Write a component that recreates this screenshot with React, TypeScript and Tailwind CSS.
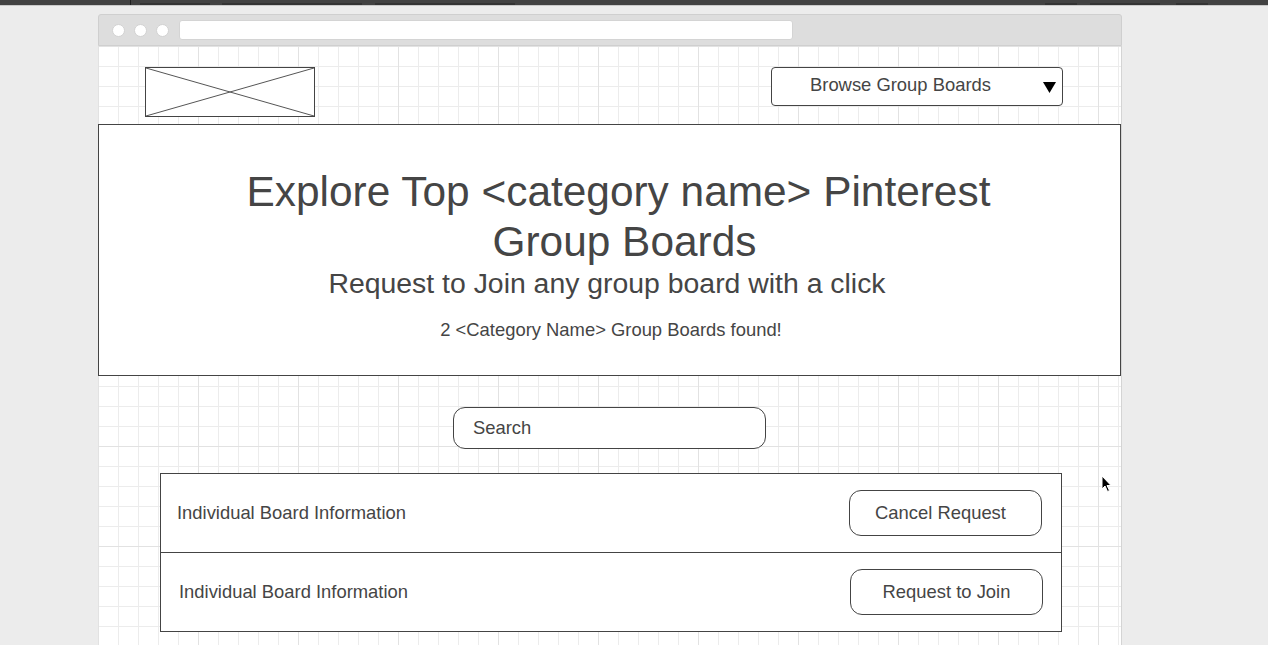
import React from "react"

const rows = [
  { label: "Individual Board Information", action: "Cancel Request", textPad: "pl-[16px]", btnPad: "pr-[19px]", btnText: "pr-[10px]" },
  { label: "Individual Board Information", action: "Request to Join", textPad: "pl-[18px]", btnPad: "pr-[18px]", btnText: "" },
]

function TopBar() {
  return (
    <div className="flex h-[6px] bg-[#424242] border-b border-[#c9c9c9]">
      <div className="w-[130px] shrink-0" />
      <div className="w-px h-full bg-[#1f1f1f]" />
      <div className="ml-[9px] w-[70px] h-[2px] self-end bg-[#333333]" />
      <div className="ml-[12px] w-[140px] h-[2px] self-end bg-[#333333]" />
      <div className="ml-[13px] w-[140px] h-[2px] self-end bg-[#333333]" />
      <div className="ml-[530px] w-[32px] h-[2px] self-end bg-[#333333]" />
      <div className="ml-[13px] w-[70px] h-[2px] self-end bg-[#333333]" />
      <div className="ml-[16px] w-[32px] h-[2px] self-end bg-[#333333]" />
    </div>
  )
}

function TitleBar() {
  return (
    <div className="flex items-center h-[32px] bg-[#dddddd] border border-[#cfcfcf] rounded-t-[3px] pl-[13px]">
      <div className="flex gap-[9px]">
        <span className="block w-[13px] h-[13px] rounded-full bg-white border border-[#d2d2d2]" />
        <span className="block w-[13px] h-[13px] rounded-full bg-white border border-[#d2d2d2]" />
        <span className="block w-[13px] h-[13px] rounded-full bg-white border border-[#d2d2d2]" />
      </div>
      <div className="ml-[10px] w-[614px] h-[20px] bg-white rounded-[3px] border border-[#d4d4d4]" />
    </div>
  )
}

function Cursor() {
  return (
    <svg className="absolute left-[1003px] top-[429px]" width="12" height="18" viewBox="0 0 12 18">
      <path d="M1 1 L1 14 L4 11 L6.5 16.5 L8.5 15.5 L6 10.5 L10 10.5 Z" fill="#000" stroke="#fff" strokeWidth="1" strokeLinejoin="round" />
    </svg>
  )
}

export default function App() {
  return (
    <div className="h-[645px] overflow-hidden bg-[#ececec] font-['Liberation_Sans',Arial,sans-serif] text-[#454545]">
      <TopBar />
      <div className="ml-[98px] mt-[8px] w-[1024px]">
        <TitleBar />
        <div className="relative h-[620px] border-r border-[#d4d4d4] bg-white bg-[linear-gradient(to_right,#e2e2e2_1px,transparent_1px),linear-gradient(to_bottom,#e2e2e2_1px,transparent_1px),linear-gradient(to_right,#ececec_1px,transparent_1px),linear-gradient(to_bottom,#ececec_1px,transparent_1px)] bg-[size:100px_100px,100px_100px,20px_20px,20px_20px]">
          <div className="flex items-start justify-between h-[78px] pl-[47px] pr-[58px]">
            <div className="mt-[21px] w-[170px] h-[50px] border border-[#444444] bg-white">
              <svg className="w-full h-full" viewBox="0 0 168 48" preserveAspectRatio="none">
                <line x1="0" y1="0" x2="168" y2="48" stroke="#555" strokeWidth="1" />
                <line x1="0" y1="48" x2="168" y2="0" stroke="#555" strokeWidth="1" />
              </svg>
            </div>
            <div className="mt-[21px] relative flex items-center w-[292px] h-[39px] border border-[#444444] rounded-[4px] bg-white pl-[38px] pb-[3px]">
              <span className="text-[18.4px]">Browse Group Boards</span>
              <svg className="absolute right-[6px] top-[14px]" width="13" height="11" viewBox="0 0 13 11">
                <polygon points="0,0 13,0 6.5,11" fill="#000" />
              </svg>
            </div>
          </div>

          <div className="flex flex-col items-center h-[252px] border border-[#444444] bg-white pt-[42px]">
            <h1 className="pl-[30px] text-[42.4px] leading-[50px] text-center">
              <span className="pr-[12px]">Explore Top &lt;category name&gt; Pinterest</span>
              <br />
              Group Boards
            </h1>
            <p className="pr-[5px] text-[28.4px] leading-[32px]">Request to Join any group board with a click</p>
            <p className="mt-[20px] pl-[3px] text-[18.4px] leading-[21px]">2 &lt;Category Name&gt; Group Boards found!</p>
          </div>

          <div className="mt-[31px] mx-auto flex items-center w-[313px] h-[42px] border border-[#444444] rounded-[12px] bg-white pl-[19px]">
            <span className="text-[18.4px]">Search</span>
          </div>

          <div className="mt-[24px] ml-[62px] w-[902px] border border-[#444444] bg-white">
            {rows.map((row, i) => (
              <div
                key={i}
                className={`flex items-center justify-between h-[78px] box-content ${i > 0 ? "border-t border-[#444444]" : ""} ${row.textPad} ${row.btnPad}`}
              >
                <span className="text-[18.4px]">{row.label}</span>
                <button className={`flex items-center justify-center w-[193px] h-[46px] border border-[#444444] rounded-[12px] bg-white text-[18.4px] ${row.btnText}`}>
                  {row.action}
                </button>
              </div>
            ))}
          </div>

          <Cursor />
        </div>
      </div>
    </div>
  )
}
